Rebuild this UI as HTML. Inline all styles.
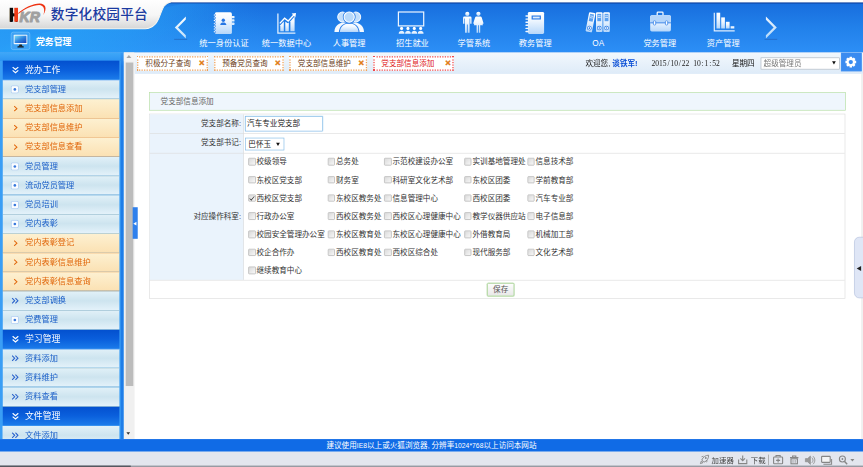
<!DOCTYPE html>
<html lang="zh-CN"><head><meta charset="utf-8"><title>数字化校园平台</title>
<style>
html,body{margin:0;padding:0;width:863px;height:467px;overflow:hidden;background:#fff}
#root{position:absolute;left:0;top:0;width:1366px;height:740px;transform:scale(0.631772);transform-origin:0 0;overflow:hidden;
 font-family:"Liberation Sans","Noto Sans CJK SC",sans-serif;font-size:12px;color:#333}
#root div,#root span,#root i,#root b{box-sizing:border-box}
.abs{position:absolute}
/* header */
#hdr{position:absolute;left:0;top:0;width:1366px;height:83.3px;background:#1577e9;overflow:hidden}
#hdr svg{position:absolute;left:0;top:0}
#title{position:absolute;left:80.5px;top:4.6px;font-size:21.6px;letter-spacing:0.35px;font-weight:500;color:#1b3aa0;white-space:nowrap;text-shadow:0 0 2px #fff}
#mod{position:absolute;left:57px;top:55px;font-size:14px;font-weight:bold;color:#fff;white-space:nowrap}
.nav{position:absolute;top:8px;width:100px;height:75px;text-align:center;color:#fff}
.nico{position:absolute;left:30px;top:6px;width:40px;height:40px}
.nlab{position:absolute;left:-10px;width:120px;top:50px;font-size:13px;white-space:nowrap;color:#fff}
/* tabbar */
#tabbar{position:absolute;left:212.9px;top:83.3px;width:1160px;height:33.4px;background:linear-gradient(#f2f8fd,#deebf8)}
.tab{position:absolute;top:88.5px;height:23.4px;border:2px dotted #ef9f55;background:#fff;font-size:12px;color:#6b3d16;white-space:nowrap;line-height:19.4px;padding-left:11px}
.tab b{position:absolute;right:3px;top:-0.5px;color:#e07a10;font-size:15px;font-weight:bold;font-family:'Liberation Sans',sans-serif;-webkit-text-stroke:0.6px #e07a10}
.tab.act{border-color:#f24a4a;color:#e02020}
/* sidebar */
#side{position:absolute;left:0;top:83.3px;width:196.4px;height:611.6px;background:linear-gradient(#3fa8f8,#2e96f3 13px,#3a9ef5 14px);overflow:hidden}
#side:after{content:'';position:absolute;right:0;top:0;width:5.7px;height:100%;background:linear-gradient(#3a9cf4,#1f7de8 22px)}
#menu{position:absolute;left:0;top:0;width:1366px;height:694.9px;overflow:hidden;pointer-events:none}
.mrow{position:absolute;left:4.1px;width:185.4px;white-space:nowrap;font-size:13px;line-height:30.4px;border-bottom:1px solid #9cc;}
.mh{font-size:14px;background:linear-gradient(#0350cf,#0a5fdc 50%,#1b7bea);color:#fff;border-bottom-color:#2a86ee}
.mi{background:linear-gradient(#e2f1f8,#cde4ef 50%,#e4f2fa);color:#1b5fc8;border-bottom-color:#a3c2cc}
.ms{background:linear-gradient(#fdf1d2,#fbe1b3);color:#e0660a;border-bottom-color:#f2b470}
.mt{position:absolute;left:35.5px;top:0}
.ic{position:absolute}
/* scroll */
#sb{position:absolute;left:196.4px;top:83.3px;width:16.5px;height:611.6px;background:#f0f0f0}
#sbth{position:absolute;left:3.0px;top:15.8px;width:11.4px;height:511.9px;background:#bcbcbc}
/* footer */
#foot{position:absolute;left:0;top:694.9px;width:1366px;height:20.3px;background:#106be6;color:#fff;font-size:12px;text-align:center;line-height:20.3px}
.ln{font-size:10.8px}
.dc{display:inline-block;width:6px;text-align:center}
#status{position:absolute;left:0;top:715.1px;width:1366px;height:24.1px;background:#e3e6ee;border-bottom:2px solid #8e929a}
#status:after{content:'';position:absolute;left:0;bottom:-2px;width:207.4px;height:2px;background:#4c5058}
/* content */
#ptitle{position:absolute;left:236.2px;top:145.9px;width:1102.8px;height:29.3px;border:1px solid #b6e0a0;background:#eff6fd;color:#666;padding-left:17px;line-height:27.3px}
#tbl{position:absolute;left:236.2px;top:179.7px;width:1102.3px;height:293.3px;border:1px solid #dcdcdc;background:#fff}
#lblcol{position:absolute;left:0;top:0;width:148.5px;height:262.7px;background:#eaf3fc;border-right:1px solid #dcdcdc}
.tri{position:absolute;width:0;height:0;border-left:3px solid transparent;border-right:3px solid transparent;border-top:5.5px solid #111}
.hl{position:absolute;left:0;width:100%;height:1px;background:#dcdcdc}
.lbl{position:absolute;left:0;width:145.3px;text-align:right;color:#333;white-space:nowrap}
.cb{position:absolute;white-space:nowrap;height:20px;line-height:20px;color:#333;padding-left:13.0px}
.bx{position:absolute;left:0;top:4px;width:11.6px;height:11.6px;border:1px solid #a6a6a6;background:linear-gradient(135deg,#dadada,#f8f8f8);border-radius:1.5px}
.bx.on:after{content:'';position:absolute;left:3px;top:0px;width:3px;height:6.5px;border:solid #222;border-width:0 1.8px 1.8px 0;transform:rotate(40deg)}
</style></head><body>
<div id="root">
 <div id="hdr">
  <svg width="1366" height="84" viewBox="0 0 1366 84">
   <defs>
    <linearGradient id="gw" x1="0" y1="0" x2="0" y2="1"><stop offset="0" stop-color="#ffffff"/><stop offset="0.55" stop-color="#f6f6f6"/><stop offset="1" stop-color="#d6d6d6"/></linearGradient>
    <linearGradient id="gb" x1="0" y1="0" x2="0" y2="1"><stop offset="0" stop-color="#176bdc"/><stop offset="0.5" stop-color="#2180ea"/><stop offset="0.97" stop-color="#2c8ef6"/><stop offset="1" stop-color="#1f7ce4"/></linearGradient>
    <linearGradient id="gleft" x1="0" y1="0" x2="1" y2="0"><stop offset="0" stop-color="#28a2f8" stop-opacity="0.75"/><stop offset="0.5" stop-color="#28a2f8" stop-opacity="0.45"/><stop offset="1" stop-color="#28a2f8" stop-opacity="0"/></linearGradient>
    <linearGradient id="gband" gradientUnits="userSpaceOnUse" x1="120" y1="20" x2="160" y2="110"><stop offset="0" stop-color="#2aa4f8" stop-opacity="0"/><stop offset="0.12" stop-color="#2aa4f8" stop-opacity="0.5"/><stop offset="0.6" stop-color="#2aa4f8" stop-opacity="0.25"/><stop offset="1" stop-color="#2aa4f8" stop-opacity="0"/></linearGradient>
   </defs>
   <rect x="0" y="0" width="1366" height="84" fill="url(#gb)"/>
   <polygon points="0,84 0,66 300,4 620,4 250,84" fill="url(#gband)"/>
   <rect x="0" y="0" width="1366" height="5.6" fill="#0d419f"/><rect x="0" y="0" width="1366" height="3.8" fill="#fdfdfd"/>
   <rect x="0" y="5" width="420" height="80" fill="url(#gleft)"/>
   <path d="M-2,-2 L272,-2 L270,3 C254,6 256,27 246,38 C240,45.5 232,45.5 222,45.5 L-2,45.5 Z" fill="url(#gw)" stroke="#fbf7ee" stroke-width="1.6"/>

  </svg>
  <div id="title">数字化校园平台</div>
  <div id="mod">党务管理</div>
  <div class="nav" style="left:304.6px"><div class="nico" id="nico0"></div><div class="nlab">统一身份认证</div></div>
<div class="nav" style="left:403.5px"><div class="nico" id="nico1"></div><div class="nlab">统一数据中心</div></div>
<div class="nav" style="left:502.6px"><div class="nico" id="nico2"></div><div class="nlab">人事管理</div></div>
<div class="nav" style="left:602.8px"><div class="nico" id="nico3"></div><div class="nlab">招生就业</div></div>
<div class="nav" style="left:700.1px"><div class="nico" id="nico4"></div><div class="nlab">学管系统</div></div>
<div class="nav" style="left:797.3px"><div class="nico" id="nico5"></div><div class="nlab">教务管理</div></div>
<div class="nav" style="left:896.9px"><div class="nico" id="nico6"></div><div class="nlab" style="top:53.2px">OA</div></div>
<div class="nav" style="left:994.4px"><div class="nico" id="nico7"></div><div class="nlab">党务管理</div></div>
<div class="nav" style="left:1094.7px"><div class="nico" id="nico8"></div><div class="nlab">资产管理</div></div>
  <svg class="abs" style="left:0;top:0" width="1366" height="84" viewBox="0 0 1366 84"><g transform="scale(1.58285)"><defs><linearGradient id="gi" x1="0" y1="0" x2="0" y2="1"><stop offset="0" stop-color="#ffffff"/><stop offset="0.35" stop-color="#f2f8ff"/><stop offset="1" stop-color="#b6d7fa"/></linearGradient><linearGradient id="ga" x1="0" y1="0" x2="0" y2="1"><stop offset="0" stop-color="#ffffff"/><stop offset="1" stop-color="#bfe0fb"/></linearGradient></defs><path d="M185.8,16.4 V19.6 L178,27.4 L185.8,35.2 V38.4 L174.8,27.4 Z" fill="url(#ga)"/><rect x="174.2" y="38.9" width="13" height="0.7" fill="#1d3f8c" opacity="0.55"/><path d="M765.9,16.6 V19.8 L773.6,27.5 L765.9,35.2 V38.4 L776.8,27.5 Z" fill="url(#ga)" opacity="0.92"/><rect x="764.6" y="38.9" width="12.6" height="0.7" fill="#1d3f8c" opacity="0.5"/><g><rect x="231.6" y="16" width="2.9" height="2.3" rx="0.6" fill="#eaf4ff"/><rect x="231.6" y="19.3" width="2.9" height="2.3" rx="0.6" fill="#e0efff"/><rect x="231.6" y="22.6" width="2.9" height="2.3" rx="0.6" fill="#d6e9fe"/><rect x="214.8" y="12.3" width="17.1" height="21.7" rx="1.6" fill="url(#gi)"/><rect x="216" y="13" width="14.8" height="1.4" fill="#ffffff"/><circle cx="223.3" cy="20.2" r="1.7" fill="#2877e4"/><path d="M220.2,25 C220.4,22.9 221.9,22.5 223.3,22.5 C224.7,22.5 226.2,22.9 226.4,25 Z" fill="#2877e4"/><circle cx="215.1" cy="15.0" r="0.85" fill="#2b7de6"/><rect x="213.6" y="14.6" width="1.9" height="0.9" rx="0.45" fill="#fff"/><circle cx="215.1" cy="17.8" r="0.85" fill="#2b7de6"/><rect x="213.6" y="17.4" width="1.9" height="0.9" rx="0.45" fill="#fff"/><circle cx="215.1" cy="20.6" r="0.85" fill="#2b7de6"/><rect x="213.6" y="20.1" width="1.9" height="0.9" rx="0.45" fill="#fff"/><circle cx="215.1" cy="23.4" r="0.85" fill="#2b7de6"/><rect x="213.6" y="22.9" width="1.9" height="0.9" rx="0.45" fill="#fff"/><circle cx="215.1" cy="26.2" r="0.85" fill="#2b7de6"/><rect x="213.6" y="25.8" width="1.9" height="0.9" rx="0.45" fill="#fff"/><circle cx="215.1" cy="29.0" r="0.85" fill="#2b7de6"/><rect x="213.6" y="28.6" width="1.9" height="0.9" rx="0.45" fill="#fff"/><circle cx="215.1" cy="31.8" r="0.85" fill="#2b7de6"/><rect x="213.6" y="31.3" width="1.9" height="0.9" rx="0.45" fill="#fff"/></g><g><path d="M277.9,13.5 V33.2 H295.4" fill="none" stroke="#e0eefe" stroke-width="1.3"/><path d="M280.3,31.3 V25.2 L283.8,21.6 V31.3 Z" fill="url(#gi)"/><path d="M285.3,31.3 V21.5 L287.6,23.3 L288.8,22.4 V31.3 Z" fill="url(#gi)"/><path d="M290.4,31.3 V21.3 L294.6,16.6 V31.3 Z" fill="url(#gi)"/><path d="M279.8,23.4 L284.6,18.2 L288.2,21 L294,14.8" fill="none" stroke="#fff" stroke-width="1.3"/><path d="M291.6,13.6 L296,13 L295.4,17.4 Z" fill="#fff"/></g><g><path d="M334.4,31.9 C334.6,26.2 338.6,23.2 343,22.6 L355.4,22.6 C359.8,23.2 363.8,26.2 364,31.9 Z" fill="#f4f9ff"/><circle cx="342.6" cy="17" r="4.9" fill="#c2defb" stroke="#f4f9ff" stroke-width="1"/><circle cx="355.8" cy="17" r="4.9" fill="#c2defb" stroke="#f4f9ff" stroke-width="1"/><path d="M338.8,32.6 C339,27 342.6,24 346.2,23 L352.2,23 C355.8,24 359.4,27 359.6,32.6 Z" fill="#2a7ee8"/><path d="M339.9,31.9 C340.2,27.4 343.2,24.8 346.4,23.8 L352,23.8 C355.2,24.8 358.2,27.4 358.5,31.9 Z" fill="url(#gi)"/><circle cx="349.2" cy="17.1" r="6.4" fill="#2a7ee8"/><circle cx="349.2" cy="17.1" r="5.1" fill="#b8d9fa" stroke="#fbfdff" stroke-width="1.1"/></g><g><rect x="398.4" y="12" width="25.3" height="13.9" fill="none" stroke="#eef6ff" stroke-width="1.2"/><circle cx="401.60" cy="28.4" r="1.55" fill="#fff"/><path d="M398.70,33.7 C398.70,29.9 404.50,29.9 404.50,33.7 Z" fill="#e6f1fe"/><circle cx="407.95" cy="28.4" r="1.55" fill="#fff"/><path d="M405.05,33.7 C405.05,29.9 410.85,29.9 410.85,33.7 Z" fill="#e6f1fe"/><circle cx="414.30" cy="28.4" r="1.55" fill="#fff"/><path d="M411.40,33.7 C411.40,29.9 417.20,29.9 417.20,33.7 Z" fill="#e6f1fe"/><circle cx="420.65" cy="28.4" r="1.55" fill="#fff"/><path d="M417.75,33.7 C417.75,29.9 423.55,29.9 423.55,33.7 Z" fill="#e6f1fe"/></g><g fill="url(#gi)"><circle cx="467.3" cy="13.9" r="2.1"/><path d="M463.1,17.8 Q463.1,16.6 464.3,16.6 H470.3 Q471.5,16.6 471.5,17.8 V23.8 H470.2 V18.4 H469.6 V32.7 H467.7 V24.6 H466.9 V32.7 H465 V18.4 H464.4 V23.8 H463.1 Z"/><circle cx="478.4" cy="13.8" r="2.1"/><path d="M476.3,16.6 H480.5 Q481.4,16.6 481.7,17.6 L483.6,23.6 L482.4,24 L480.8,19 L483,25.2 H480.2 V32.7 H478.8 V25.2 H478 V32.7 H476.6 V25.2 H473.8 L476,19 L474.4,24 L473.2,23.6 L475.1,17.6 Q475.4,16.6 476.3,16.6 Z"/></g><g><rect x="527.9" y="11.9" width="16.2" height="22.1" rx="1.4" fill="url(#gi)"/><rect x="531.6" y="15.5" width="9.3" height="4" fill="#2a7be6"/><rect x="532.8" y="16.6" width="6.9" height="1.8" fill="#dcecfe"/><rect x="525.3" y="15.30" width="3.4" height="1.4" rx="0.7" fill="#f4f9ff"/><rect x="525.3" y="18.40" width="3.4" height="1.4" rx="0.7" fill="#f4f9ff"/><rect x="525.3" y="21.50" width="3.4" height="1.4" rx="0.7" fill="#f4f9ff"/><rect x="525.3" y="24.60" width="3.4" height="1.4" rx="0.7" fill="#f4f9ff"/><rect x="525.3" y="27.70" width="3.4" height="1.4" rx="0.7" fill="#f4f9ff"/><rect x="525.3" y="30.80" width="3.4" height="1.4" rx="0.7" fill="#f4f9ff"/></g><g><g transform="rotate(11 588.5 31.9)"><rect x="585.4" y="12.3" width="6.5" height="19.6" rx="1" fill="url(#gi)"/><rect x="586.6999999999999" y="13.8" width="3.9" height="7.4" fill="#5aa0f0"/><rect x="587.1999999999999" y="15.4" width="2.9" height="0.8" fill="#e4f0fe"/><rect x="587.1999999999999" y="17.2" width="2.9" height="0.8" fill="#e4f0fe"/><circle cx="588.65" cy="28" r="2.3" fill="#2a7be6"/><circle cx="588.65" cy="28" r="1.6" fill="#fff"/><circle cx="588.65" cy="28" r="0.8" fill="#2a7be6"/></g><rect x="596" y="12.3" width="6.5" height="19.6" rx="1" fill="url(#gi)"/><rect x="597.3" y="13.8" width="3.9" height="7.4" fill="#5aa0f0"/><rect x="597.8" y="15.4" width="2.9" height="0.8" fill="#e4f0fe"/><rect x="597.8" y="17.2" width="2.9" height="0.8" fill="#e4f0fe"/><circle cx="599.25" cy="28" r="2.3" fill="#2a7be6"/><circle cx="599.25" cy="28" r="1.6" fill="#fff"/><circle cx="599.25" cy="28" r="0.8" fill="#2a7be6"/><rect x="603.3" y="12.3" width="6.5" height="19.6" rx="1" fill="url(#gi)"/><rect x="604.5999999999999" y="13.8" width="3.9" height="7.4" fill="#5aa0f0"/><rect x="605.0999999999999" y="15.4" width="2.9" height="0.8" fill="#e4f0fe"/><rect x="605.0999999999999" y="17.2" width="2.9" height="0.8" fill="#e4f0fe"/><circle cx="606.55" cy="28" r="2.3" fill="#2a7be6"/><circle cx="606.55" cy="28" r="1.6" fill="#fff"/><circle cx="606.55" cy="28" r="0.8" fill="#2a7be6"/></g><g><path d="M657.2,15.6 V13 Q657.2,12.2 658,12.2 H662.2 Q663,12.2 663,13 V15.6" fill="none" stroke="#f4f9ff" stroke-width="1.3"/><rect x="650.2" y="15.2" width="20.7" height="16.2" rx="1.6" fill="url(#gi)"/><path d="M650.2,22.6 V16.8 Q650.2,15.2 651.8,15.2 H669.3 Q670.9,15.2 670.9,16.8 V22.6 Z" fill="#b4d5fa"/><rect x="650.2" y="22.4" width="20.7" height="0.9" fill="#2a7be6"/><rect x="653.4" y="20.8" width="2.3" height="4.2" rx="0.9" fill="#fff" stroke="#2a7be6" stroke-width="0.7"/><rect x="665.4" y="20.8" width="2.3" height="4.2" rx="0.9" fill="#fff" stroke="#2a7be6" stroke-width="0.7"/></g><g><path d="M714.3,12.7 V30.8 H734.7" fill="none" stroke="#e0eefe" stroke-width="1.2"/><rect x="716.5" y="12.7" width="3.7" height="15.8" fill="url(#gi)"/><rect x="721.2" y="17.4" width="3.7" height="11.1" fill="url(#gi)"/><rect x="725.9" y="21.8" width="3.7" height="6.7" fill="url(#gi)"/><rect x="730.6" y="26.2" width="3.7" height="2.3" fill="#e8f3ff"/></g></g></svg>
  <svg class="abs" style="left:0;top:0" width="200" height="84" viewBox="0 0 200 84"><g transform="scale(1.58285)"><text transform="translate(9.5,21.7) scale(0.62,1)" font-family="Liberation Sans, sans-serif" font-weight="bold" font-size="19.1" fill="#0c0c0c">H</text><rect x="9.7" y="7.8" width="3.4" height="13.9" fill="#0c0c0c"/><rect x="12.8" y="13.3" width="2" height="2.9" fill="#0c0c0c"/><rect x="14.3" y="7.8" width="3.7" height="13.9" fill="#ee3a16"/><text x="19.6" y="21.6" font-family="Liberation Sans, sans-serif" font-weight="bold" font-style="italic" font-size="14.3" fill="#a0a0a0" stroke="#a0a0a0" stroke-width="1.0" stroke-linejoin="round" textLength="20.4" lengthAdjust="spacingAndGlyphs">KR</text><path d="M18,13.2 C24,7.6 33,3.6 39.6,3.4 C45.6,3.4 47.6,8.4 43.2,15.2 C45.6,9.4 43.6,5.2 39.2,4.9 C33,5 25,8.4 18.6,13.8 Z" fill="#ee3212"/><rect x="11.2" y="32.2" width="18.6" height="17.4" rx="2" fill="#3ea2f4" stroke="#72c0fa" stroke-width="0.7"/><defs><linearGradient id="gm" x1="0" y1="0" x2="1" y2="1"><stop offset="0" stop-color="#7fe0f6"/><stop offset="0.5" stop-color="#2f86e0"/><stop offset="1" stop-color="#1840b8"/></linearGradient></defs><rect x="13.7" y="34.8" width="13.6" height="9.4" rx="0.8" fill="#f2f6fb"/><rect x="14.6" y="35.7" width="11.8" height="7.3" fill="url(#gm)"/><path d="M19.4,44.4 H21.8 L22.4,46.2 H18.8 Z" fill="#222"/><rect x="17.4" y="46.2" width="6.4" height="1.3" rx="0.6" fill="#111"/></g></svg>
 </div>
 <div id="tabbar"></div>
 <div id="tabs"><div class="tab" style="left:217.0px;width:111.6px"><span>积极分子查询</span><b>×</b></div>
<div class="tab" style="left:338.6px;width:110.5px"><span>预备党员查询</span><b>×</b></div>
<div class="tab" style="left:458.4px;width:122.8px"><span>党支部信息维护</span><b>×</b></div>
<div class="tab act" style="left:590.6px;width:127.9px"><span>党支部信息添加</span><b>×</b></div></div>
 <div id="side"></div>
 <div id="menu"><div class="mrow mh" style="top:95.60px;height:31.12px;z-index:40"><svg class="ic" style="left:14.5px;top:9.5px" width="11" height="12" viewBox="0 0 11 12"><path d="M1,1.2 L5.5,5 L10,1.2 M1,6.4 L5.5,10.2 L10,6.4" fill="none" stroke="#fff" stroke-width="1.9"/></svg><span class="mt">党办工作</span></div>
<div class="mrow mi" style="top:126.03px;height:31.12px;z-index:39"><svg class="ic" style="left:13px;top:9px" width="13" height="13" viewBox="0 0 13 13"><rect x="0.7" y="0.7" width="11.6" height="11.6" rx="2.4" fill="#fbfdff" stroke="#a4c6f0" stroke-width="1.2"/><circle cx="6.5" cy="6.5" r="2.1" fill="#3878dc"/></svg><span class="mt">党支部管理</span></div>
<div class="mrow ms" style="top:156.45px;height:31.12px;z-index:38"><svg class="ic" style="left:17px;top:10.5px" width="8" height="10" viewBox="0 0 8 10"><path d="M1.4,1 L5.8,5 L1.4,9" fill="none" stroke="#e0660a" stroke-width="1.6"/></svg><span class="mt">党支部信息添加</span></div>
<div class="mrow ms" style="top:186.87px;height:31.12px;z-index:37"><svg class="ic" style="left:17px;top:10.5px" width="8" height="10" viewBox="0 0 8 10"><path d="M1.4,1 L5.8,5 L1.4,9" fill="none" stroke="#e0660a" stroke-width="1.6"/></svg><span class="mt">党支部信息维护</span></div>
<div class="mrow ms" style="top:217.29px;height:31.12px;z-index:36"><svg class="ic" style="left:17px;top:10.5px" width="8" height="10" viewBox="0 0 8 10"><path d="M1.4,1 L5.8,5 L1.4,9" fill="none" stroke="#e0660a" stroke-width="1.6"/></svg><span class="mt">党支部信息查看</span></div>
<div class="mrow mi" style="top:247.72px;height:31.12px;z-index:35"><svg class="ic" style="left:13px;top:9px" width="13" height="13" viewBox="0 0 13 13"><rect x="0.7" y="0.7" width="11.6" height="11.6" rx="2.4" fill="#fbfdff" stroke="#a4c6f0" stroke-width="1.2"/><circle cx="6.5" cy="6.5" r="2.1" fill="#3878dc"/></svg><span class="mt">党员管理</span></div>
<div class="mrow mi" style="top:278.14px;height:31.12px;z-index:34"><svg class="ic" style="left:13px;top:9px" width="13" height="13" viewBox="0 0 13 13"><rect x="0.7" y="0.7" width="11.6" height="11.6" rx="2.4" fill="#fbfdff" stroke="#a4c6f0" stroke-width="1.2"/><circle cx="6.5" cy="6.5" r="2.1" fill="#3878dc"/></svg><span class="mt">流动党员管理</span></div>
<div class="mrow mi" style="top:308.56px;height:31.12px;z-index:33"><svg class="ic" style="left:13px;top:9px" width="13" height="13" viewBox="0 0 13 13"><rect x="0.7" y="0.7" width="11.6" height="11.6" rx="2.4" fill="#fbfdff" stroke="#a4c6f0" stroke-width="1.2"/><circle cx="6.5" cy="6.5" r="2.1" fill="#3878dc"/></svg><span class="mt">党员培训</span></div>
<div class="mrow mi" style="top:338.98px;height:31.12px;z-index:32"><svg class="ic" style="left:13px;top:9px" width="13" height="13" viewBox="0 0 13 13"><rect x="0.7" y="0.7" width="11.6" height="11.6" rx="2.4" fill="#fbfdff" stroke="#a4c6f0" stroke-width="1.2"/><circle cx="6.5" cy="6.5" r="2.1" fill="#3878dc"/></svg><span class="mt">党内表彰</span></div>
<div class="mrow ms" style="top:369.41px;height:31.12px;z-index:31"><svg class="ic" style="left:17px;top:10.5px" width="8" height="10" viewBox="0 0 8 10"><path d="M1.4,1 L5.8,5 L1.4,9" fill="none" stroke="#e0660a" stroke-width="1.6"/></svg><span class="mt">党内表彰登记</span></div>
<div class="mrow ms" style="top:399.83px;height:31.12px;z-index:30"><svg class="ic" style="left:17px;top:10.5px" width="8" height="10" viewBox="0 0 8 10"><path d="M1.4,1 L5.8,5 L1.4,9" fill="none" stroke="#e0660a" stroke-width="1.6"/></svg><span class="mt">党内表彰信息维护</span></div>
<div class="mrow ms" style="top:430.25px;height:31.12px;z-index:29"><svg class="ic" style="left:17px;top:10.5px" width="8" height="10" viewBox="0 0 8 10"><path d="M1.4,1 L5.8,5 L1.4,9" fill="none" stroke="#e0660a" stroke-width="1.6"/></svg><span class="mt">党内表彰信息查询</span></div>
<div class="mrow mi" style="top:460.67px;height:31.12px;z-index:28"><svg class="ic" style="left:14px;top:10px" width="12" height="10" viewBox="0 0 12 10"><path d="M1.2,0.8 L5.2,5 L1.2,9.2 M6.4,0.8 L10.4,5 L6.4,9.2" fill="none" stroke="#2a62cc" stroke-width="1.7"/></svg><span class="mt">党支部调换</span></div>
<div class="mrow mi" style="top:491.10px;height:31.12px;z-index:27"><svg class="ic" style="left:13px;top:9px" width="13" height="13" viewBox="0 0 13 13"><rect x="0.7" y="0.7" width="11.6" height="11.6" rx="2.4" fill="#fbfdff" stroke="#a4c6f0" stroke-width="1.2"/><circle cx="6.5" cy="6.5" r="2.1" fill="#3878dc"/></svg><span class="mt">党费管理</span></div>
<div class="mrow mh" style="top:521.52px;height:31.12px;z-index:26"><svg class="ic" style="left:14.5px;top:9.5px" width="11" height="12" viewBox="0 0 11 12"><path d="M1,1.2 L5.5,5 L10,1.2 M1,6.4 L5.5,10.2 L10,6.4" fill="none" stroke="#fff" stroke-width="1.9"/></svg><span class="mt">学习管理</span></div>
<div class="mrow mi" style="top:551.94px;height:31.12px;z-index:25"><svg class="ic" style="left:14px;top:10px" width="12" height="10" viewBox="0 0 12 10"><path d="M1.2,0.8 L5.2,5 L1.2,9.2 M6.4,0.8 L10.4,5 L6.4,9.2" fill="none" stroke="#2a62cc" stroke-width="1.7"/></svg><span class="mt">资料添加</span></div>
<div class="mrow mi" style="top:582.36px;height:31.12px;z-index:24"><svg class="ic" style="left:14px;top:10px" width="12" height="10" viewBox="0 0 12 10"><path d="M1.2,0.8 L5.2,5 L1.2,9.2 M6.4,0.8 L10.4,5 L6.4,9.2" fill="none" stroke="#2a62cc" stroke-width="1.7"/></svg><span class="mt">资料维护</span></div>
<div class="mrow mi" style="top:612.78px;height:31.12px;z-index:23"><svg class="ic" style="left:14px;top:10px" width="12" height="10" viewBox="0 0 12 10"><path d="M1.2,0.8 L5.2,5 L1.2,9.2 M6.4,0.8 L10.4,5 L6.4,9.2" fill="none" stroke="#2a62cc" stroke-width="1.7"/></svg><span class="mt">资料查看</span></div>
<div class="mrow mh" style="top:643.21px;height:31.12px;z-index:22"><svg class="ic" style="left:14.5px;top:9.5px" width="11" height="12" viewBox="0 0 11 12"><path d="M1,1.2 L5.5,5 L10,1.2 M1,6.4 L5.5,10.2 L10,6.4" fill="none" stroke="#fff" stroke-width="1.9"/></svg><span class="mt">文件管理</span></div>
<div class="mrow mi" style="top:673.63px;height:31.12px;z-index:21"><svg class="ic" style="left:14px;top:10px" width="12" height="10" viewBox="0 0 12 10"><path d="M1.2,0.8 L5.2,5 L1.2,9.2 M6.4,0.8 L10.4,5 L6.4,9.2" fill="none" stroke="#2a62cc" stroke-width="1.7"/></svg><span class="mt">文件添加</span></div></div>
 <div id="sb"><div id="sbth"></div></div>
 <div id="ptitle">党支部信息添加</div>
 <div id="tbl">
  <div id="lblcol"></div>
  <div class="hl" style="top:30.0px"></div>
  <div class="hl" style="top:61.8px"></div>
  <div class="hl" style="top:262.7px"></div>
 </div>
 <div id="cbs"><div class="cb" style="left:393.0px;top:246.3px"><i class="bx"></i>校级领导</div>
<div class="cb" style="left:518.9px;top:246.3px"><i class="bx"></i>总务处</div>
<div class="cb" style="left:608.3px;top:246.3px"><i class="bx"></i>示范校建设办公室</div>
<div class="cb" style="left:734.9px;top:246.3px"><i class="bx"></i>实训基地管理处</div>
<div class="cb" style="left:834.6px;top:246.3px"><i class="bx"></i>信息技术部</div>
<div class="cb" style="left:393.0px;top:274.9px"><i class="bx"></i>东校区党支部</div>
<div class="cb" style="left:518.9px;top:274.9px"><i class="bx"></i>财务室</div>
<div class="cb" style="left:608.3px;top:274.9px"><i class="bx"></i>科研室文化艺术部</div>
<div class="cb" style="left:734.9px;top:274.9px"><i class="bx"></i>东校区团委</div>
<div class="cb" style="left:834.6px;top:274.9px"><i class="bx"></i>学前教育部</div>
<div class="cb" style="left:393.0px;top:303.6px"><i class="bx on"></i>西校区党支部</div>
<div class="cb" style="left:518.9px;top:303.6px"><i class="bx"></i>东校区教务处</div>
<div class="cb" style="left:608.3px;top:303.6px"><i class="bx"></i>信息管理中心</div>
<div class="cb" style="left:734.9px;top:303.6px"><i class="bx"></i>西校区团委</div>
<div class="cb" style="left:834.6px;top:303.6px"><i class="bx"></i>汽车专业部</div>
<div class="cb" style="left:393.0px;top:332.3px"><i class="bx"></i>行政办公室</div>
<div class="cb" style="left:518.9px;top:332.3px"><i class="bx"></i>西校区教务处</div>
<div class="cb" style="left:608.3px;top:332.3px"><i class="bx"></i>西校区心理健康中心</div>
<div class="cb" style="left:734.9px;top:332.3px"><i class="bx"></i>教学仪器供应站</div>
<div class="cb" style="left:834.6px;top:332.3px"><i class="bx"></i>电子信息部</div>
<div class="cb" style="left:393.0px;top:361.0px"><i class="bx"></i>校园安全管理办公室</div>
<div class="cb" style="left:518.9px;top:361.0px"><i class="bx"></i>东校区教育处</div>
<div class="cb" style="left:608.3px;top:361.0px"><i class="bx"></i>东校区心理健康中心</div>
<div class="cb" style="left:734.9px;top:361.0px"><i class="bx"></i>外借教育局</div>
<div class="cb" style="left:834.6px;top:361.0px"><i class="bx"></i>机械加工部</div>
<div class="cb" style="left:393.0px;top:389.7px"><i class="bx"></i>校企合作办</div>
<div class="cb" style="left:518.9px;top:389.7px"><i class="bx"></i>西校区教育处</div>
<div class="cb" style="left:608.3px;top:389.7px"><i class="bx"></i>西校区综合处</div>
<div class="cb" style="left:734.9px;top:389.7px"><i class="bx"></i>现代服务部</div>
<div class="cb" style="left:834.6px;top:389.7px"><i class="bx"></i>文化艺术部</div>
<div class="cb" style="left:393.0px;top:418.4px"><i class="bx"></i>继续教育中心</div></div>
 <div id="foot">建议使用<span class="ln">IE8</span>以上或火狐浏览器<span class="ln">, </span>分辨率<span class="ln">1024*768</span>以上访问本网站</div>
 <div id="status"></div>
 <svg class="abs" style="left:0;top:0" width="1366" height="740" viewBox="0 0 1366 740"><g transform="scale(1.58285)"><path d="M708.6,455.2 C705.6,455.2 703,457 701.8,460 L704,462.2 C707,461 708.8,458.4 708.6,455.2 Z M701.4,461 L700.4,463.6 L703,462.6 Z" fill="none" stroke="#868686" stroke-width="0.9"/><circle cx="705.8" cy="458" r="0.9" fill="#868686"/><path d="M701.5,456.8 l2,-0.6 M706.6,462.3 l0.6,-2" stroke="#868686" stroke-width="0.8"/><path d="M738.6,459.6 V463.6 H746.8 V459.6" fill="none" stroke="#868686" stroke-width="1.1"/><path d="M742.7,455.4 V460.4 M740.4,458.4 L742.7,460.8 L745,458.4" fill="none" stroke="#868686" stroke-width="1.1"/><rect x="768" y="454.6" width="0.7" height="10.6" fill="#9a9a9a"/><rect x="773.6" y="457" width="9" height="6.8" rx="0.8" fill="none" stroke="#868686" stroke-width="1.1"/><path d="M776,457 V455.6 H780.2 V457" fill="none" stroke="#868686" stroke-width="1"/><path d="M778.1,458.4 V462.4 M776.1,460.4 H780.1" stroke="#868686" stroke-width="1.1"/><path d="M790,457.6 H798.4 M792.6,457.4 V456 H795.8 V457.4" fill="none" stroke="#868686" stroke-width="1.1"/><rect x="791" y="458.8" width="6.4" height="5" fill="none" stroke="#868686" stroke-width="1.1"/><path d="M793,460 V462.8 M795.2,460 V462.8" stroke="#868686" stroke-width="0.7"/><path d="M805.4,458.6 H807.6 L810.4,456 V464.4 L807.6,461.8 H805.4 Z" fill="#9a9a9a" stroke="#868686" stroke-width="0.6"/><path d="M811.8,457.6 C813.4,459 813.4,461.4 811.8,462.8 M813,456.2 C815.4,458.4 815.4,462 813,464.2" fill="none" stroke="#868686" stroke-width="0.8"/><rect x="821.6" y="456.4" width="8.6" height="6" rx="0.6" fill="#f4f4f4" stroke="#868686" stroke-width="1.1"/><path d="M823.4,464.2 H831.6 V459" fill="none" stroke="#868686" stroke-width="1"/><circle cx="842.4" cy="459" r="3" fill="none" stroke="#868686" stroke-width="1.1"/><path d="M844.6,461.4 L847.2,464.2" stroke="#868686" stroke-width="1.4"/><circle cx="842.4" cy="459" r="0.9" fill="#868686"/><path d="M850.4,459 H854.4 L852.4,461.4 Z" fill="#868686"/><text x="711.6" y="463" font-family="Liberation Sans, Noto Sans CJK SC, sans-serif" font-size="7.4" fill="#444">加速器</text><text x="750.8" y="463" font-family="Liberation Sans, Noto Sans CJK SC, sans-serif" font-size="7.4" fill="#444">下载</text></g></svg>
 
 <div class="abs" id="welcome" style="left:926.6px;top:91.2px;white-space:nowrap;line-height:18.0px;color:#222">欢迎您, <b style="color:#0b4fd6">谈铁军!</b></div>
 <div class="abs" id="date" style="left:1031.2px;top:91.2px;white-space:nowrap;line-height:18.0px;color:#222;font-family:'Liberation Serif',serif;font-size:12px"><span class="dc">2</span><span class="dc">0</span><span class="dc">1</span><span class="dc">5</span><span class="dc">/</span><span class="dc">1</span><span class="dc">0</span><span class="dc">/</span><span class="dc">2</span><span class="dc">2</span><span class="dc">&nbsp;</span><span class="dc">1</span><span class="dc">0</span><span class="dc">:</span><span class="dc">1</span><span class="dc">:</span><span class="dc">5</span><span class="dc">2</span></div>
 <div class="abs" id="wday" style="left:1158.5px;top:91.2px;white-space:nowrap;line-height:18.0px;color:#111">星期四</div>
 <div class="abs" id="role" style="left:1203.6px;top:90.5px;width:125.7px;height:19.6px;border:1px solid #a4b0bc;background:#fff;color:#7a7a7a;line-height:17.6px;padding-left:4px;white-space:nowrap">超级管理员<span class="tri" style="right:5.7px;top:5.8px"></span></div>
 <div class="abs" id="gear" style="left:1331.2px;top:83px;width:32.9px;height:30.2px;background:#3a8bf0;box-shadow:inset 0 0 0 1px #4a98f4">
  <svg width="33" height="29" viewBox="0 0 33 29"><g transform="translate(15.7,15.2)"><g fill="#fff">
   <circle r="6.4"/>
   <g id="tth"><path d="M-1.9,-8.5 H1.9 L2.4,-5 H-2.4 Z"/></g>
   <use href="#tth" transform="rotate(45)"/><use href="#tth" transform="rotate(90)"/><use href="#tth" transform="rotate(135)"/><use href="#tth" transform="rotate(180)"/><use href="#tth" transform="rotate(225)"/><use href="#tth" transform="rotate(270)"/><use href="#tth" transform="rotate(315)"/>
   </g><circle r="3.4" fill="#3a8bf0"/></g></svg>
 </div>
 <div class="abs lbl" style="left:236.2px;top:179.7px;line-height:31.5px">党支部名称:</div>
 <div class="abs lbl" style="left:236.2px;top:211.2px;line-height:31.8px">党支部书记:</div>
 <div class="abs lbl" style="left:236.2px;top:243.0px;line-height:200.9px">对应操作科室:</div>
 <div class="abs" id="inp" style="left:388.1px;top:184.2px;width:122.8px;height:23.7px;border:1px solid #7fb9e6;background:#fff;line-height:21.7px;padding-left:2px;color:#222;white-space:nowrap;box-shadow:0 0 2px #a9d2f2">汽车专业党支部</div>
 <div class="abs" id="sel" style="left:388.1px;top:217.6px;width:62.4px;height:20.9px;border:1px solid #7fb9e6;background:#fff;line-height:18.9px;padding-left:4px;color:#222;white-space:nowrap">巴怀玉<span class="tri" style="right:6px;top:7px"></span></div>
 <div class="abs" id="save" style="left:770.8px;top:447.9px;width:43.4px;height:21.2px;border:1px solid #8cc474;background:linear-gradient(#fdfdfd,#e8e8e8);border-radius:2px;text-align:center;line-height:19.2px;color:#555;box-shadow:0 0 0 1px #d8ecd0">保存</div>
 <div class="abs" style="left:1363.2px;top:116.7px;width:4px;height:578.2px;background:#f0f0f0"></div>
 <div class="abs" id="lh" style="left:210.4px;top:327.7px;width:8.1px;height:50.3px;background:#2f80ec"><span style="position:absolute;left:1px;top:19px;width:0;height:0;border:3.5px solid transparent;border-right:5px solid #fff;border-left:0;margin-top:4px"></span></div>
 <div class="abs" id="rh" style="left:1351.8px;top:375.1px;width:19.0px;height:96.6px;background:#dfe6f6;border:1px solid #b3bfdc;border-radius:8px 0 0 8px"><span style="position:absolute;left:3px;top:42px;width:0;height:0;border:4.5px solid transparent;border-right:7px solid #222;border-left:0;margin-top:3px"></span></div>
 
 <div class="abs" id="sbup" style="left:196.4px;top:83.3px;width:16.5px;height:14.2px;background:#f4f4f4"><span style="position:absolute;left:4px;top:4px;width:0;height:0;border:4.5px solid transparent;border-bottom:5px solid #a6a6a6;border-top:0"></span></div>
 <div class="abs" id="sbdn" style="left:199.8px;top:683.8px;width:0;height:0;border:3.5px solid transparent;border-top:4.5px solid #333;border-bottom:0"></div>

</div>
</body></html>
